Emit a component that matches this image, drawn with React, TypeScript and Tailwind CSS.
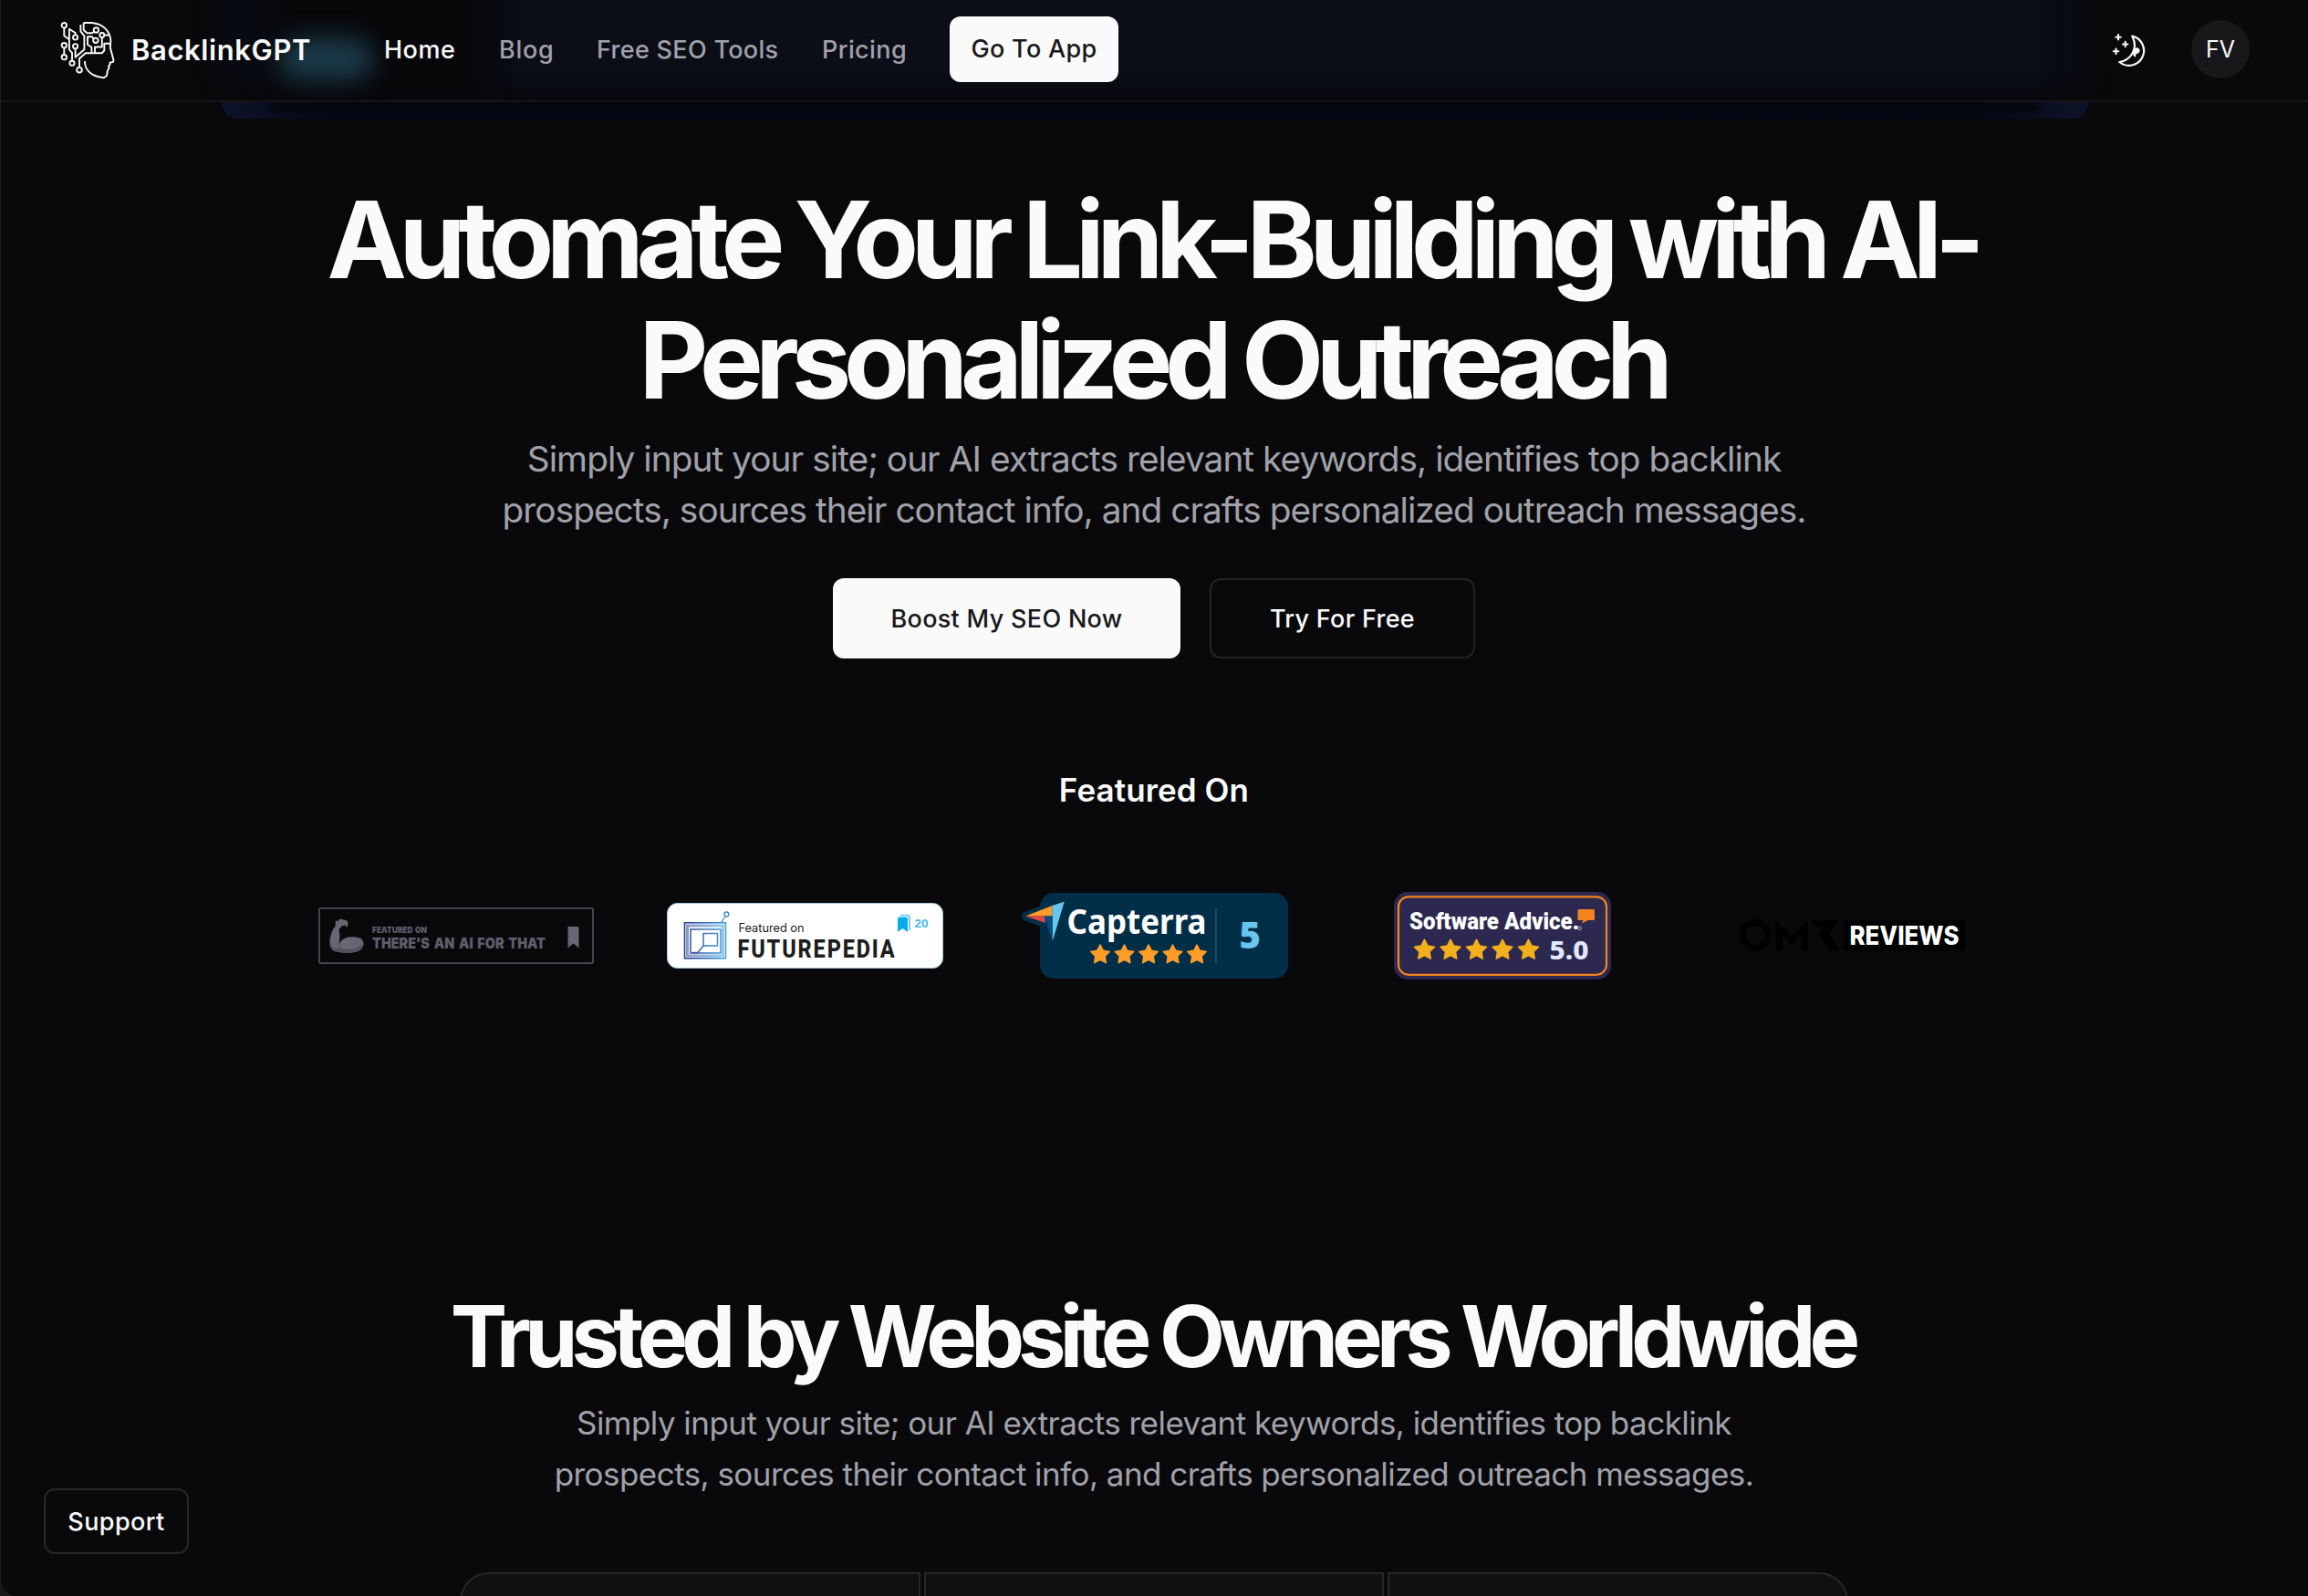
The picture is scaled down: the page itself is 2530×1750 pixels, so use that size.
const STAR =
  "M0-10.2 3.1-4 10-3 5 1.9 6.2 8.9 0 5.6-6.2 8.9-5 1.9-10-3-3.1-4Z";

function BrandMark() {
  return (
    <svg className="h-[62px] w-[58px] shrink-0 overflow-visible" viewBox="0 0 58 62" fill="none" stroke="#fafafa" strokeWidth="1.9" strokeLinejoin="round">
      <circle cx="3.3" cy="3.7" r="2.7" />
      <path d="M3.3 6.4V15.3L8.9 19.3" />
      <path d="M15.6 14.3V12L8.9 7.7V30.3L12 34V42.6" />
      <circle cx="15.6" cy="17" r="2.6" />
      <circle cx="12" cy="45.3" r="2.6" />
      <circle cx="3.3" cy="25.7" r="2.7" />
      <path d="M3.3 28.4V36" />
      <circle cx="3.3" cy="38.7" r="2.7" />
      <circle cx="15.6" cy="26.7" r="2.6" />
      <path d="M15.6 29.3V38.7L25.4 30.3V15.3L21.4 10.3V3" />
      <circle cx="20" cy="52.7" r="2.8" />
      <path d="M20 50V40.3L26.7 34.3H44.6L47.3 31.5V23.7H53.5" />
      <path d="M24.7 1H33.4C46 2 53.5 10 54.4 20.3L53.8 28L57.5 42L57 43.9L53.5 44.7V47L52 48.7L52.6 51L51 53L50 59L46.8 61.2C36 60 26 55 25.9 43" />
      <path d="M24.7 1V9L28.5 12.3H34L36.4 10.6" />
      <circle cx="38.4" cy="9" r="2.7" />
      <circle cx="44.8" cy="14.5" r="2.5" />
      <path d="M47.3 14.5H52.5M44.8 17V27.5H37V34" />
      <circle cx="37.9" cy="20.3" r="2.7" />
      <path d="M35.6 18.6L34 16.3H29V25L33.4 27.7V34" />
    </svg>
  );
}

function MoonStars() {
  return (
    <svg className="h-9 w-9 overflow-visible" viewBox="0 0 36 36" fill="none" stroke="#fafafa" strokeWidth="2.2" strokeLinejoin="round" strokeLinecap="round">
      <path d="M21.3 2.6A16.3 16.3 0 1 1 7.3 31C18 29.5 29 18 21.3 2.6Z" />
      <path d="M23.5 17.5A3 3 0 1 1 25.5 21.5L24.5 25.5L22.5 23.5Z" fill="#fafafa" strokeWidth="0.6" />
      <path d="M6 1V6.4M3.3 3.7H8.7M13.7 8.8V14.2M11 11.5H16.4M3.5 16.6V22M.8 19.3H6.2" strokeWidth="2.1" />
    </svg>
  );
}

function Stars({ xs, y, fill, scale }: { xs: number[]; y: number; fill: string; scale: number }) {
  return (
    <>
      {xs.map((x) => (
        <path key={x} d={STAR} transform={`translate(${x} ${y}) scale(${scale})`} fill={fill} stroke={fill} strokeWidth="1.6" strokeLinejoin="round" />
      ))}
    </>
  );
}

function AiForThatBadge() {
  return (
    <svg className="h-[62px] w-[302px]" viewBox="0 0 302 62">
      <rect x="0.9" y="0.9" width="300.2" height="60.2" rx="2" fill="none" stroke="#4b4a57" strokeWidth="1.8" />
      <path d="M19 14L21 15.5L23.5 12.5L28 13.5Q33 14 32.5 18L31.5 22L29.5 19.5L25.5 20.5L22.5 24Q24.5 33 22 42Q24 34 33 32.5Q49 31 49.5 39Q50 48 37 49.5Q22 50.5 16 47Q11 43 13 33Q15 24 18.5 21Z" fill="#666772" />
      <path d="M13 40Q20 48 22 43Q34 50 49 40Q49 48 37 49.5Q22 50.5 16 47Z" fill="#52535f" />
      <g fill="#5f5e6b" fontFamily="Inter, sans-serif" fontWeight="900">
        <text x="59" y="28.3" fontSize="9" wordSpacing="1" textLength="60" lengthAdjust="spacingAndGlyphs">FEATURED ON</text>
        <text x="59" y="44.8" fontSize="15.5" wordSpacing="2" textLength="190" lengthAdjust="spacingAndGlyphs">THERE&apos;S AN AI FOR THAT</text>
      </g>
      <path d="M273.5 21H284Q285.5 21 285.5 23V44.5L279.5 39.5L273.5 44.5V22Z" fill="#676672" />
    </svg>
  );
}

function FuturepediaBadge() {
  return (
    <svg className="h-[72px] w-[303px]" viewBox="0 0 303 72">
      <defs>
        <linearGradient id="tv" gradientUnits="userSpaceOnUse" x1="19" x2="65" y1="0" y2="0">
          <stop offset="0" stopColor="#2d3f8f" />
          <stop offset="1" stopColor="#45a5dd" />
        </linearGradient>
      </defs>
      <rect x="0.5" y="0.5" width="302" height="71" rx="11" fill="#fff" stroke="#a9cbe6" />
      <g fill="none" stroke="url(#tv)">
        <rect x="19.5" y="21.8" width="45" height="39" strokeWidth="1.6" />
        <rect x="22.5" y="25" width="39" height="33" strokeWidth="3" strokeOpacity="0.55" />
        <rect x="26" y="29" width="33" height="26" strokeWidth="1.5" />
        <rect x="40" y="33.5" width="15.5" height="13.5" strokeWidth="1.5" />
        <path d="M40 47L34 54.5H28" strokeWidth="1.5" />
      </g>
      <path d="M59.5 21.5L64 15" stroke="#3a86c8" strokeWidth="1.3" />
      <circle cx="65.3" cy="12.5" r="2.5" fill="none" stroke="#3a86c8" strokeWidth="1.3" />
      <text x="78.5" y="31.5" fontFamily="Inter, sans-serif" fontSize="12.8" textLength="72" fill="#1b1b1b">Featured on</text>
      <text x="78" y="60.5" fontFamily="Roboto, sans-serif" fontWeight="800" fontSize="27" letterSpacing="2" transform="translate(77.5 0) scale(0.87 1) translate(-78 0)" textLength="200" fill="#1d1d1d">FUTUREPEDIA</text>
      <path d="M256 13.5H263.5Q266 13.5 266 16V30" fill="none" stroke="#7ccdf5" strokeWidth="2" />
      <path d="M254 15.5H262Q264 15.5 264 17.5V32L258.5 28L253 32V17Z" fill="#08acee" />
      <text x="271.5" y="27" fontFamily="Liberation Sans, sans-serif" fontWeight="700" fontSize="13.5" fill="#45b8ee">20</text>
    </svg>
  );
}

function CapterraBadge() {
  return (
    <svg className="ml-0.5 h-[95px] w-[294px]" viewBox="0 0 294 95">
      <rect x="21" width="272" height="94" rx="15" fill="#022f47" />
      <path d="M22 14L3 21.5Q-1.5 25.5 3 30L22 37Z" fill="#022f47" />
      <path d="M5 25.6L34.5 14V25.6Z" fill="#ff9d28" />
      <path d="M5 25.6H26L27 33Z" fill="#e54747" />
      <path d="M34.5 14L47.8 9.5L34.8 53Z" fill="#68c5ed" />
      <path d="M26 25.6H34.5V53Z" fill="#044d80" />
      <text x="50.5" y="45" fontFamily="Noto Sans, sans-serif" fontWeight="700" fontSize="37.5" textLength="153" lengthAdjust="spacingAndGlyphs" fill="#fff">Capterra</text>
      <Stars xs={[87, 113.5, 140, 166.5, 193]} y={67.5} fill="#ff9d28" scale={1.02} />
      <rect x="213" y="17" width="1.8" height="60" fill="#14506c" />
      <text x="239.5" y="60.5" fontFamily="Noto Sans, sans-serif" fontWeight="900" fontSize="40" fill="#68c5ed">5</text>
    </svg>
  );
}

function SoftwareAdviceBadge() {
  return (
    <svg className="h-24 w-[238px]" viewBox="0 0 238 96">
      <rect width="238" height="96" rx="15" fill="#2d284f" />
      <rect x="5" y="5.3" width="228" height="85.5" rx="11" fill="none" stroke="#f4831f" strokeWidth="2.2" />
      <text x="17" y="41" fontFamily="Roboto, sans-serif" fontWeight="900" fontSize="26" textLength="186" lengthAdjust="spacingAndGlyphs" fill="#fff">Software Advice.</text>
      <circle cx="203.5" cy="39.8" r="1.8" fill="none" stroke="#fff" strokeWidth="0.7" />
      <path d="M203 19H218.5Q220 19 220 20.5V29.5Q220 31 218.5 31H213L206 34.5L207.5 31H203Q201.5 31 201.5 29.5V20.5Q201.5 19 203 19Z" fill="#f4831f" />
      <Stars xs={[33.5, 62, 90.5, 119, 147.5]} y={63.5} fill="#f2b01c" scale={1.08} />
      <text x="170.5" y="73.8" fontFamily="Noto Sans, sans-serif" fontWeight="800" fontSize="27.5" textLength="43" lengthAdjust="spacingAndGlyphs" fill="#dfe9fb">5.0</text>
    </svg>
  );
}

function OmrBadge() {
  return (
    <svg className="h-9 w-[248px] overflow-visible" viewBox="0 0 248 36">
      <circle cx="17.8" cy="17.5" r="14" fill="none" stroke="#010102" strokeWidth="7" />
      <path d="M40.5 1L58 19L76 1V34.5H68V18L58 29L48.5 18V34.5H40.5Z" fill="#010102" />
      <path d="M79 1H110L99 16L110 34.5H100L88 17.5L93 8H84Z" fill="#010102" />
      <rect x="115" y="1" width="133" height="34" rx="4" fill="#000" />
      <text x="121.5" y="28.3" fontFamily="Inter, sans-serif" fontWeight="800" fontSize="28" textLength="120" lengthAdjust="spacingAndGlyphs" fill="#fff">REVIEWS</text>
    </svg>
  );
}

function Header() {
  return (
    <header className="relative z-10 flex h-28 shrink-0 items-center overflow-hidden border-b-2 border-[#161618] bg-[#09090b] pr-16 pl-[66px]">
      <div className="absolute -top-20 left-[240px] h-[180px] w-[2050px] rounded-3xl bg-[#090b12] blur-md" />
      <div className="absolute -top-20 left-[300px] h-[190px] w-[226px] bg-[#08080a] blur-lg" />
      <div className="absolute -top-20 left-[558px] h-[176px] w-[1680px] rounded-2xl bg-[#0b0e17] blur-sm" />
      <div className="absolute top-[42px] left-[304px] h-[46px] w-[104px] rounded-full bg-[#1a3a4a] blur-[13px]" />

      <a className="relative flex items-center whitespace-nowrap">
        <BrandMark />
        <span className="ml-[19px] w-[200px] text-[31px] font-semibold tracking-[0.6px] text-[#fafafa]">BacklinkGPT</span>
      </a>
      <nav className="relative ml-[77px] flex items-center text-[27px] font-medium whitespace-nowrap text-[#a1a1aa]">
        <a className="w-[126px] tracking-[0.5px] text-[#fafafa]">Home</a>
        <a className="w-[107px] tracking-[0.7px]">Blog</a>
        <a className="w-[247px] tracking-[0.3px]">Free SEO Tools</a>
        <a className="w-[140px] tracking-[0.4px]">Pricing</a>
        <a className="mb-0.5 flex h-[72px] w-[185px] items-center justify-center rounded-xl bg-[#fafafa] pt-px tracking-[0.3px] text-[#18181b]">
          Go To App
        </a>
      </nav>
      <div className="relative ml-auto flex items-center gap-[50px]">
        <MoonStars />
        <div className="mb-0.5 flex h-16 w-16 items-center justify-center rounded-full bg-[#18181a] pt-px text-[25px] text-[#fafafa]">FV</div>
      </div>
    </header>
  );
}

export default function App() {
  return (
    <div className="h-[1750px] w-full overflow-hidden bg-[#18181a] font-['Inter',sans-serif]">
      <div className="relative flex h-full flex-col overflow-hidden rounded-bl-[18px] border-l border-[#1f1f22] bg-[#09090b]">
        <Header />
        <div className="mx-auto h-[18px] w-[2046px] shrink-0 overflow-hidden rounded-b-[26px] bg-[linear-gradient(90deg,#0c1229_0%,#0a0e20_3%,#060817_6%,#060816_94%,#0a0e20_97%,#0c1229_100%)]">
          <div className="mx-auto h-2.5 w-[1940px] bg-[#04050b] blur-[4px]" />
        </div>

        <main className="-ml-px flex flex-col items-center">
          <h1 className="mt-[67px] mr-1 text-center text-[117px] leading-[132px] font-bold tracking-[-8.25px] [word-spacing:-1px] whitespace-nowrap text-[#fafafa]">
            Automate Your Link-Building with AI-
            <br />
            <span className="tracking-[-8.3px]">Personalized Outreach</span>
          </h1>
          <p className="mt-[14px] text-center text-[38.8px] leading-[56px] tracking-[-0.96px] whitespace-nowrap text-[#a1a1aa]">
            Simply input your site; our AI extracts relevant keywords, identifies top backlink
            <br />
            prospects, sources their contact info, and crafts personalized outreach messages.
          </p>

          <div className="mt-[47px] flex gap-8 text-[27px] font-medium tracking-[0.3px] whitespace-nowrap">
            <button className="h-[88px] w-[381px] rounded-xl bg-[#fafafa] pt-0.5 text-[#18181b]">Boost My SEO Now</button>
            <button className="h-[88px] w-[291px] rounded-xl border-2 border-[#232326] pt-0.5 text-[#fafafa]">Try For Free</button>
          </div>

          <h3 className="mt-[116px] text-[35px] leading-[56px] font-semibold tracking-[0.1px] whitespace-nowrap text-[#fafafa]">Featured On</h3>
          <div className="mt-[84px] grid h-24 w-[1912px] grid-cols-5 items-center justify-items-center">
            <AiForThatBadge />
            <FuturepediaBadge />
            <CapterraBadge />
            <SoftwareAdviceBadge />
            <OmrBadge />
          </div>

          <h2 className="mt-[343px] mr-1 text-[93.5px] leading-[96px] font-bold tracking-[-6.85px] whitespace-nowrap text-[#fafafa]">
            Trusted by Website Owners Worldwide
          </h2>
          <p className="mt-[19px] text-center text-[35px] leading-[56px] tracking-[-0.55px] whitespace-nowrap text-[#a1a1aa]">
            Simply input your site; our AI extracts relevant keywords, identifies top backlink
            <br />
            prospects, sources their contact info, and crafts personalized outreach messages.
          </p>

          <div className="mt-20 grid h-24 w-[1522px] grid-cols-3 gap-1">
            <div className="rounded-tl-[32px] border-2 border-[#27272a] bg-[#101012]" />
            <div className="border-2 border-[#27272a] bg-[#101012]" />
            <div className="rounded-tr-[32px] border-2 border-[#27272a] bg-[#101012]" />
          </div>
        </main>

        <button className="absolute bottom-[46px] left-[47px] h-[72px] w-[159px] rounded-xl border-2 border-[#27272a] bg-[#09090b] pt-0.5 text-[27px] font-medium tracking-[0.4px] text-[#fafafa]">
          Support
        </button>
      </div>
    </div>
  );
}
